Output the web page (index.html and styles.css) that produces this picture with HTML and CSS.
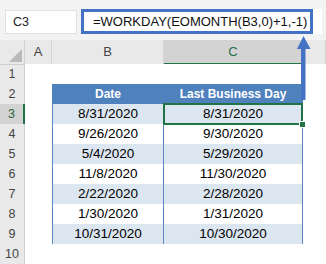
FILE: index.html
```html
<!DOCTYPE html>
<html lang="en">
<head>
    <meta charset="UTF-8">
    <title>WORKDAY EOMONTH</title>
    <link rel="stylesheet" href="styles.css">
</head>
<body>
    <div class="app">
        <div class="formula-bar">
            <div class="name-box">C3</div>
            <div class="formula-field">
                <div class="formula-text">=WORKDAY(EOMONTH(B3,0)+1,-1)</div>
            </div>
        </div>

        <div class="sheet">
            <div class="row head-row">
                <div class="corner"></div>
                <div class="col-head">A</div>
                <div class="col-head">B</div>
                <div class="col-head active">C</div>
                <div class="col-head"></div>
            </div>
            <div class="row">
                <div class="row-head">1</div>
                <div class="cell"></div><div class="cell"></div><div class="cell"></div><div class="cell"></div>
            </div>
            <div class="row">
                <div class="row-head">2</div>
                <div class="cell"></div>
                <div class="t th first">Date</div>
                <div class="t th">Last Business Day</div>
                <div class="cell"></div>
            </div>
            <div class="row">
                <div class="row-head active">3</div>
                <div class="cell"></div>
                <div class="t band first">8/31/2020</div>
                <div class="t band sel">8/31/2020</div>
                <div class="cell"></div>
            </div>
            <div class="row">
                <div class="row-head">4</div>
                <div class="cell"></div>
                <div class="t first">9/26/2020</div>
                <div class="t">9/30/2020</div>
                <div class="cell"></div>
            </div>
            <div class="row">
                <div class="row-head">5</div>
                <div class="cell"></div>
                <div class="t band first">5/4/2020</div>
                <div class="t band">5/29/2020</div>
                <div class="cell"></div>
            </div>
            <div class="row">
                <div class="row-head">6</div>
                <div class="cell"></div>
                <div class="t first">11/8/2020</div>
                <div class="t">11/30/2020</div>
                <div class="cell"></div>
            </div>
            <div class="row">
                <div class="row-head">7</div>
                <div class="cell"></div>
                <div class="t band first">2/22/2020</div>
                <div class="t band">2/28/2020</div>
                <div class="cell"></div>
            </div>
            <div class="row">
                <div class="row-head">8</div>
                <div class="cell"></div>
                <div class="t first">1/30/2020</div>
                <div class="t">1/31/2020</div>
                <div class="cell"></div>
            </div>
            <div class="row">
                <div class="row-head">9</div>
                <div class="cell"></div>
                <div class="t band first">10/31/2020</div>
                <div class="t band">10/30/2020</div>
                <div class="cell"></div>
            </div>
            <div class="row">
                <div class="row-head">10</div>
                <div class="cell"></div><div class="cell"></div><div class="cell"></div><div class="cell"></div>
            </div>
        </div>

        <!-- callout arrow from the table up to the formula -->
        <svg class="arrow" width="16" height="68" viewBox="0 0 16 68">
            <rect x="5" y="12" width="4.5" height="54" fill="#4472c4"/>
            <polygon points="7.5,2 1,15 14.5,15" fill="#4472c4"/>
        </svg>
    </div>
</body>
</html>
```

FILE: styles.css
```css
body {
    margin: 0;
    background: #ffffff;
    font-family: "Liberation Sans", Arial, sans-serif;
    color: #000;
}

.app {
    position: relative;
    width: 326px;
    height: 264px;
    overflow: hidden;
}

/* formula bar */
.formula-bar {
    display: flex;
    height: 40px;
    box-sizing: border-box;
    padding: 9px 4px 0 5px;
    background: #f3f3f3;
}

.name-box {
    width: 72px;
    height: 24px;
    margin-top: 1px;
    margin-right: 4px;
    box-sizing: border-box;
    padding-left: 7px;
    background: #fff;
    border: 1px solid #e2e2e2;
    font-size: 12.5px;
    line-height: 22px;
    color: #222;
}

.formula-field {
    flex: 1;
    height: 25px;
    background: #fff;
}

.formula-text {
    width: 232px;
    height: 25px;
    box-sizing: border-box;
    padding-left: 9px;
    border: 3px solid #4472c4;
    font-size: 13px;
    line-height: 19px;
    color: #111;
    white-space: nowrap;
}

/* grid */
.row {
    display: grid;
    grid-template-columns: 25px 27px 112px 139px 1fr;
    height: 20px;
}

.head-row {
    height: 24px;
}

.corner,
.col-head,
.row-head {
    box-sizing: border-box;
    background: #e9e9e9;
    color: #444;
    text-align: center;
}

.corner {
    position: relative;
    border-right: 1px solid #cfcfcf;
    border-bottom: 1px solid #cfcfcf;
}

.corner::after {
    content: "";
    position: absolute;
    right: 2px;
    bottom: 2px;
    width: 0;
    height: 0;
    border-left: 13px solid transparent;
    border-bottom: 13px solid #b9b9b9;
}

.col-head {
    border-right: 1px solid #d4d4d4;
    border-bottom: 1px solid #cfcfcf;
    font-size: 13px;
    line-height: 23px;
}

.col-head.active {
    background: #d3d3d3;
    color: #217346;
    border-bottom: 2px solid #217346;
}

.row-head {
    border-right: 1px solid #cfcfcf;
    border-bottom: 1px solid #d8d8d8;
    font-size: 12.5px;
    line-height: 20px;
}

.row-head.active {
    background: #d3d3d3;
    color: #2b5d40;
    border-right: 2px solid #217346;
}

.cell {
    background: #fff;
}

/* table */
.t {
    box-sizing: border-box;
    border-right: 1px solid #5b87c7;
    border-bottom: 1px solid #5b87c7;
    background: #fff;
    text-align: center;
    font-size: 13.5px;
    line-height: 19px;
    white-space: nowrap;
}

.t.first {
    border-left: 1px solid #5b87c7;
}

.t.th {
    background: #4f81bd;
    border-color: #4f81bd;
    border-top: 1px solid #4f81bd;
    color: #fff;
    font-weight: bold;
    font-size: 12px;
    line-height: 19px;
}

.t.band {
    background: #dce6f1;
}

.t.sel {
    position: relative;
}

.t.sel::after {
    content: "";
    position: absolute;
    top: -1px;
    left: -1px;
    right: -1px;
    bottom: -1px;
    border: 2px solid #217346;
}

.t.sel::before {
    content: "";
    position: absolute;
    right: -3px;
    bottom: -3px;
    width: 5px;
    height: 5px;
    background: #217346;
    outline: 1px solid #fff;
    z-index: 1;
}

.arrow {
    position: absolute;
    left: 296px;
    top: 34px;
    z-index: 2;
}
```
